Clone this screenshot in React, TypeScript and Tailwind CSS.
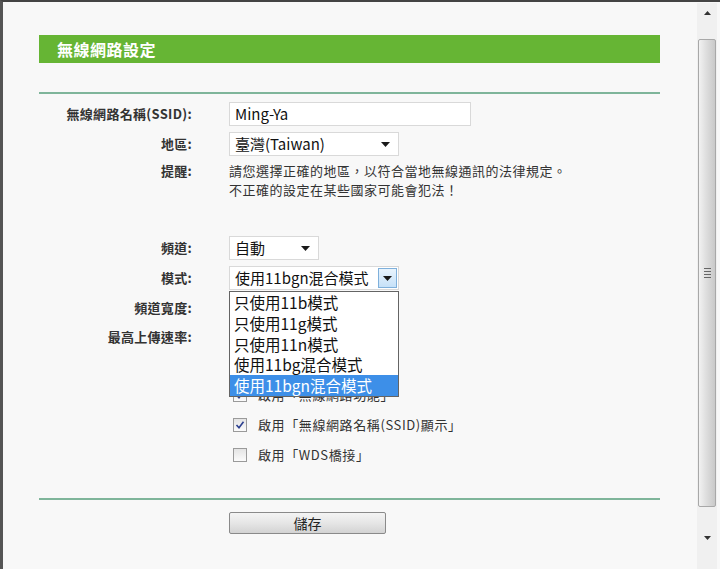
const FONT = '"Noto Sans CJK TC", "Liberation Sans", sans-serif'

function Caret() {
  return (
    <svg width="9" height="5" viewBox="0 0 9 5" className="block">
      <path d="M0 0 L9 0 L4.5 5 Z" fill="#1a1a1a" />
    </svg>
  )
}

function Label({ children }: { children: React.ReactNode }) {
  return (
    <div className="w-[153px] shrink-0 text-right text-[13px] font-bold tracking-[0.3px] text-[#333]">{children}</div>
  )
}

function Select({ value, width }: { value: string; width: string }) {
  return (
    <div className={`${width} h-[24px] flex items-center justify-between bg-white border border-[#d9d9d9] pl-[5px] pr-[8px] text-[15px] text-[#111]`}>
      <span>{value}</span>
      <Caret />
    </div>
  )
}

function Check({ checked, label }: { checked: boolean; label: string }) {
  return (
    <div className="flex items-center h-[30px] pl-[4px]">
      <div className="w-[14px] h-[14px] border border-[#9a9a9a] bg-gradient-to-b from-[#e4e4e4] to-[#fbfbfb] flex items-center justify-center">
        {checked && (
          <svg width="10" height="10" viewBox="0 0 10 10">
            <path d="M1.5 5 L4 7.8 L8.5 1.8" stroke="#2c3f8f" strokeWidth="1.6" fill="none" />
          </svg>
        )}
      </div>
      <span className="ml-[11px] text-[13px] tracking-[0.6px] text-[#333]">{label}</span>
    </div>
  )
}

const modes = ['只使用11b模式', '只使用11g模式', '只使用11n模式', '使用11bg混合模式', '使用11bgn混合模式']

export default function App() {
  return (
    <div className="w-[720px] h-[569px] overflow-hidden flex bg-[#f8f8f8] border-t-2 border-l-[3px] border-t-[#444] border-l-[#555]" style={{ fontFamily: FONT }}>
      <div className="flex-1 pl-[36px] pr-[37px] pt-[33px]">
        {/* header */}
        <div className="h-[28px] bg-[#66b534] flex items-center pl-[18px] text-white text-[16px] font-bold tracking-[0.5px]">
          無線網路設定
        </div>
        <div className="mt-[29px] h-[2px] bg-[#7fb59a]" />

        <div className="relative">
          <div className="mt-[8px] flex items-center">
            <Label>無線網路名稱(SSID):</Label>
            <div className="ml-[37px] w-[242px] h-[24px] bg-white border border-[#d9d9d9] flex items-center pl-[5px] text-[15px] text-[#111]">
              Ming-Ya
            </div>
          </div>
          <div className="mt-[6px] flex items-center">
            <Label>地區:</Label>
            <div className="ml-[37px]">
              <Select value="臺灣(Taiwan)" width="w-[170px]" />
            </div>
          </div>
          <div className="mt-[5px] flex items-start">
            <Label>
              <span className="leading-[19px]">提醒:</span>
            </Label>
            <div className="ml-[37px] text-[13px] leading-[19px] tracking-[0.5px] text-[#333]">
              <div>請您選擇正確的地區，以符合當地無線通訊的法律規定。</div>
              <div>不正確的設定在某些國家可能會犯法！</div>
            </div>
          </div>

          <div className="mt-[37px] flex items-center">
            <Label>頻道:</Label>
            <div className="ml-[37px]">
              <Select value="自動" width="w-[90px]" />
            </div>
          </div>
          <div className="mt-[6px] flex items-center">
            <Label>模式:</Label>
            <div className="ml-[37px] w-[170px] h-[24px] flex bg-white border border-[#d9d9d9] text-[15px] text-[#111]">
              <span className="flex-1 flex items-center pl-[5px]">使用11bgn混合模式</span>
              <div className="w-[19px] m-[1px] flex items-center justify-center bg-gradient-to-b from-[#e9f4fd] to-[#c6e1f8] border border-[#7fb0db]">
                <Caret />
              </div>
            </div>
          </div>
          <div className="mt-[6px] flex items-center h-[24px]">
            <Label>頻道寬度:</Label>
          </div>
          <div className="mt-[5px] flex items-center h-[24px]">
            <Label>最高上傳速率:</Label>
          </div>

          <div className="mt-[31px] ml-[190px]">
            <Check checked label="啟用「無線網路功能」" />
            <Check checked label="啟用「無線網路名稱(SSID)顯示」" />
            <Check checked={false} label="啟用「WDS橋接」" />
          </div>

          {/* open dropdown list */}
          <div className="absolute left-[190px] top-[189px] w-[170px] bg-white border border-[#646464] text-[15.5px] leading-[20.8px] text-[#111]">
            {modes.map((m, i) => (
              <div key={m} className={i === modes.length - 1 ? 'pl-[4px] bg-[#3d8fe8] text-white' : 'pl-[4px]'}>
                {m}
              </div>
            ))}
          </div>
        </div>

        <div className="mt-[28px] h-[2px] bg-[#7fb59a]" />
        <div className="mt-[12px] ml-[190px] w-[157px] h-[22px] flex items-center justify-center rounded-[2px] border border-[#8a8a8a] bg-gradient-to-b from-[#f4f4f4] via-[#e6e6e6] to-[#d3d3d3] text-[14px] text-[#222]">
          儲存
        </div>
      </div>

      {/* scrollbar */}
      <div className="w-[20px] mr-[3px] mt-[1px] flex flex-col bg-[#f0f0f0]">
        <div className="h-[36px] flex items-start justify-center pt-[8px]">
          <svg width="7" height="4" viewBox="0 0 7 4"><path d="M0 4 L3.5 0 L7 4 Z" fill="#333" /></svg>
        </div>
        <div className="h-[468px] mx-[1px] rounded-[2px] border border-[#a8a8a8] bg-gradient-to-r from-[#f2f2f2] via-[#dcdcdc] to-[#c9c9c9] flex items-center justify-center">
          <div className="w-[7px] flex flex-col gap-[2px]">
            <div className="h-px bg-[#666]" />
            <div className="h-px bg-[#666]" />
            <div className="h-px bg-[#666]" />
            <div className="h-px bg-[#666]" />
          </div>
        </div>
        <div className="flex-1 flex items-center justify-center">
          <svg width="7" height="4" viewBox="0 0 7 4"><path d="M0 0 L3.5 4 L7 0 Z" fill="#333" /></svg>
        </div>
      </div>
    </div>
  )
}
